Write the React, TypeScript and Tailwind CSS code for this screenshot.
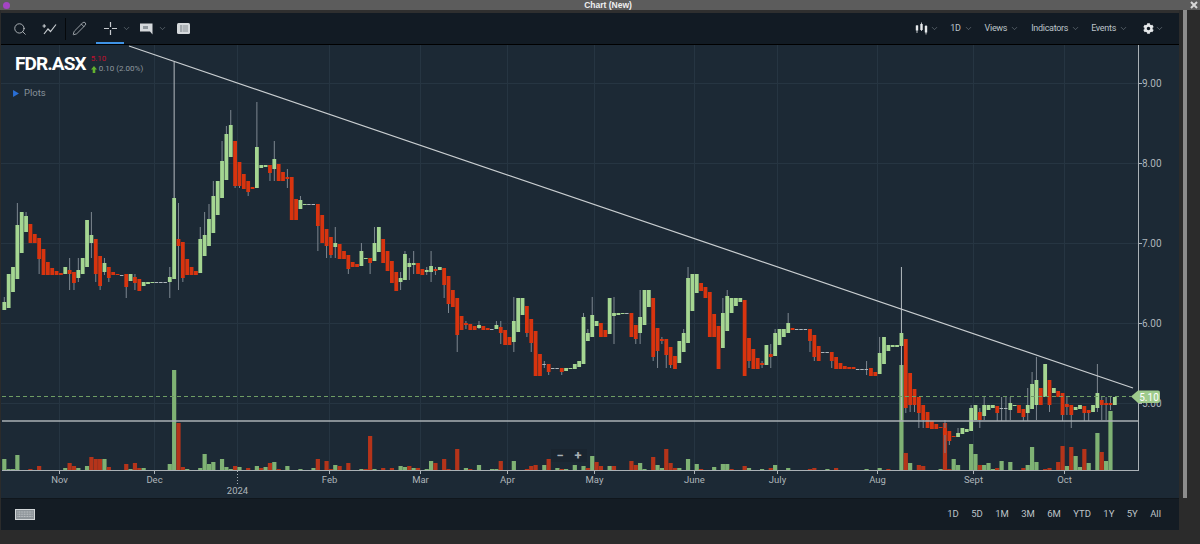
import { ChevronDown, Pencil, Search } from 'lucide-react';
import { FaCog } from 'react-icons/fa';

type Candle = [string, number, number, number?, number?];

// Pixel coordinates of the series, y runs from the top of the window
const CANDLES: Candle[] = [
  ['g',302,310,297],['g',274,308],['g',267,292],['g',225,279,203],['g',212,253],['g',216,232,212],['r',224,243],['r',234,243],['r',238,259,238,274],['r',249,275],
  ['r',262,275],['r',268,275],['r',271,275],['r',273,275],['g',267,274],['r',270,274,258,290],['r',272,283,272,290],['g',270,278,258,282],['g',258,274],['g',220,267],
  ['g',235,243,212,258],['r',239,274,239,282],['r',256,286,256,290],['g',263,272,258,275],['r',267,278,267,282],['r',272,275],['r',274,275],['d',275,276],['r',274,287,274,298],['g',274,281],
  ['r',277,283,274,290],['r',279,291],['g',282,286],['g',282,284],['g',282,283],['d',282,283],['d',282,283],['d',282,283],['g',277,282,267,298],['g',198,279,62,279],
  ['r',239,246,203,290],['r',242,278,242,282],['r',259,275],['r',267,275],['r',271,275],['g',239,273,227,273],['g',235,256,212,256],['g',219,246,204,246],['g',196,233,181,233],['g',181,215],
  ['g',161,198,141,198],['g',134,180,126,180],['g',125,157,110,157],['r',141,186,141,188],['r',162,186,162,188],['r',174,189],['r',181,192,181,196],['r',187,189],['g',147,188,102,188],['g',165,168],
  ['g',165,167],['r',165,173,165,181],['g',159,169,141,181],['r',164,181],['r',172,181],['r',177,179,169,188],['r',177,220],['r',199,220],['g',200,209,196,209],['g',204,205],
  ['d',204,205],['d',204,205],['r',204,226,204,251],['r',215,243],['r',229,246,229,258],['r',237,255,237,258],['g',243,247,227,258],['r',244,259],['r',251,259],['r',255,269,255,274],
  ['r',262,267],['r',264,267],['g',251,266,243,266],['g',258,259],['r',258,263,258,274],['g',243,261,227,261],['g',227,252],['r',239,263],['r',251,271],['r',261,283],
  ['r',272,291],['g',278,282,272,290],['g',254,280,251,280],['g',263,267,258,280],['g',263,265,251,274],['r',263,274],['r',269,275],['g',270,272,267,275],['g',266,272,251,282],['r',269,271,267,275],
  ['g',267,270],['r',268,285,268,298],['r',276,304,276,313],['r',290,307],['r',298,335,298,352],['r',316,330],['r',323,325,321,329],['r',324,330],['r',326,330],['g',325,328,321,329],
  ['r',326,330],['r',328,330],['d',329,330],['g',325,329,321,329],['r',327,333,321,344],['r',330,345],['r',337,345],['g',321,342,297,352],['g',298,332],['g',298,315],
  ['r',306,333,306,337],['r',319,343,319,352],['r',331,376],['r',354,376],['d',364,365,361,368],['r',364,372,364,375],['d',368,369],['d',368,369],['r',368,372,368,375],['g',368,371],
  ['g',368,369],['g',364,369],['g',361,367],['g',317,364,313,364],['g',333,341,329,341],['g',315,337,297,337],['g',321,326],['r',323,337],['r',330,337],['g',298,334],
  ['g',313,316,297,344],['g',313,315],['g',313,314],['d',313,314],['r',313,337],['r',325,339,325,344],['g',317,333,290,344],['g',290,325],['g',290,307],['r',298,357,298,361],
  ['r',328,351,328,368],['r',339,341,337,344],['r',339,355,339,368],['r',347,365,347,368],['r',356,369],['g',341,363],['g',333,352,329,352],['g',278,343,267,343],['g',274,311],['g',274,293],
  ['r',283,291],['r',287,298],['r',292,337],['r',314,337],['r',326,369],['g',313,348,298,348],['g',296,331,290,331],['g',298,313],['g',298,306],['g',298,302],
  ['r',300,376],['r',338,361,338,368],['r',349,369],['r',358,369],['r',363,365,361,368],['g',345,365],['r',354,357,344,368],['g',333,356,329,356],['g',329,345],['g',329,337],
  ['g',323,333,313,333],['r',328,330],['d',329,330],['d',329,330],['d',329,330],['r',329,341,329,352],['r',335,357,335,361],['r',346,361],['d',352,353],['d',352,353],
  ['r',352,361,352,368],['r',357,369],['r',363,369],['r',366,369],['r',367,369],['r',367,369],['d',369,370],['d',369,370],['d',369,370,361,375],['r',368,376],
  ['r',372,376],['g',353,374,337,374],['g',337,364],['g',345,351],['g',345,347],['g',345,347],['g',333,346,267,420],['r',339,408,339,413],['r',373,405,373,412],['r',389,405,389,412],
  ['r',397,413,397,428],['r',405,420,405,428],['r',412,428],['r',421,429],['r',424,429],['r',427,428],['r',428,435,420,453],['r',431,441,431,445],['r',436,437],['g',433,437,428,437],
  ['g',428,434],['g',429,432],['g',408,431,405,431],['g',405,420],['r',412,420,408,428],['g',405,416,397,420],['g',405,410],['g',405,408],['r',406,413,406,421],['d',408,409,397,421],
  ['d',408,409,397,421],['g',403,410,397,420],['g',405,406],['r',405,413],['r',409,417,409,421],['g',405,413,388,421],['g',384,409,372,409],['g',380,405,357,420],['r',388,405],['g',364,397],
  ['r',380,405,380,412],['g',388,393],['r',391,397],['r',393,415,393,421],['r',404,407,397,415],['r',405,415,405,428],['g',407,410],['g',405,409],['r',406,413,406,421],['r',410,413,410,421],
  ['g',405,412],['g',393,408,364,412],['r',400,405,397,420],['r',403,405,397,420],['r',403,405,397,410],['g',397,405],
];

// [candle index, top of the bar, colour]; the bars stand on y=470
const VOLUME: [number, number, string][] = [
  [0,459,'g'],[1,469,'g'],[2,469,'g'],[3,455,'g'],[6,469,'r'],[8,466,'r'],[14,468,'g'],[15,463,'r'],[16,466,'r'],[17,468,'g'],[19,466,'g'],[20,457,'r'],[21,459,'r'],[22,459,'r'],[23,459,'g'],[24,467,'r'],
  [28,464,'r'],[29,469,'g'],[30,463,'r'],[31,468,'r'],[32,468,'g'],[38,464,'g'],[39,370,'g'],[40,423,'r'],[41,467,'r'],[42,469,'g'],[45,468,'g'],[46,454,'g'],[47,464,'g'],[48,462,'g'],[50,459,'g'],[51,467,'g'],
  [52,469,'g'],[53,466,'r'],[54,467,'g'],[56,468,'r'],[58,466,'g'],[59,468,'r'],[60,467,'g'],[61,463,'r'],[62,462,'g'],[63,469,'r'],[65,466,'g'],[68,469,'g'],[71,468,'g'],[72,459,'r'],[74,461,'r'],[75,469,'r'],
  [76,465,'g'],[77,466,'r'],[79,463,'r'],[82,469,'g'],[83,469,'r'],[84,436,'r'],[85,469,'g'],[87,468,'r'],[89,468,'r'],[91,466,'g'],[92,467,'g'],[93,466,'r'],[94,468,'g'],[95,468,'r'],[97,469,'g'],[98,461,'g'],
  [99,463,'r'],[101,459,'r'],[102,469,'r'],[104,449,'r'],[106,468,'g'],[107,469,'r'],[109,465,'g'],[112,469,'g'],[113,469,'g'],[114,461,'r'],[117,461,'g'],[120,469,'r'],[121,466,'r'],[122,465,'r'],[124,465,'g'],[125,459,'r'],
  [127,468,'g'],[128,469,'r'],[129,469,'g'],[131,465,'g'],[133,466,'g'],[134,468,'r'],[135,456,'g'],[136,462,'r'],[137,466,'r'],[139,466,'g'],[140,466,'r'],[144,461,'r'],[145,465,'r'],[146,463,'g'],[147,469,'g'],[149,457,'r'],
  [150,465,'g'],[151,468,'g'],[152,449,'r'],[153,463,'r'],[154,468,'r'],[155,468,'g'],[157,459,'g'],[159,464,'g'],[160,469,'r'],[163,467,'g'],[165,464,'g'],[166,464,'g'],[167,469,'r'],[170,466,'r'],[171,468,'g'],[174,469,'g'],
  [176,468,'r'],[177,465,'g'],[180,468,'g'],[185,469,'r'],[186,468,'r'],[189,469,'g'],[191,468,'r'],[198,469,'g'],[201,468,'g'],[203,469,'r'],[206,365,'g'],[207,453,'r'],[208,463,'g'],[210,465,'r'],[211,466,'r'],[215,469,'g'],
  [216,423,'r'],[217,469,'r'],[218,459,'g'],[219,465,'g'],[222,444,'g'],[223,454,'g'],[224,465,'r'],[225,465,'g'],[226,463,'g'],[227,469,'g'],[228,468,'r'],[229,461,'g'],[231,462,'g'],[234,468,'r'],[235,465,'g'],[236,447,'g'],
  [237,462,'g'],[239,469,'r'],[240,468,'r'],[242,462,'r'],[243,446,'r'],[244,466,'g'],[245,447,'r'],[246,456,'g'],[247,467,'g'],[248,449,'r'],[249,463,'g'],[251,433,'g'],[252,452,'r'],[253,461,'g'],[254,411,'g'],
];

const MONTHS: [string, number][] = [['Nov',58],['Dec',153],['Feb',328],['Mar',419],['Apr',506],['May',593],['June',693],['July',776],['Aug',876],['Sept',972],['Oct',1063]];
const GRID_X = [58,153,236,328,419,506,593,693,776,876,972,1063];
const PRICES: [string, number][] = [['9.00',83],['8.00',163],['7.00',243],['6.00',323],['5.00',403]];
const RANGES = ['1D','5D','1M','3M','6M','YTD','1Y','5Y','All'];

const cx = (i: number) => 3.3 + i * 4.355;

function Chart() {
  return (
    <svg width="1178" height="453" viewBox="0 45 1178 453" className="block" fontFamily="Roboto, sans-serif">
      {GRID_X.map((x) => <line key={x} x1={x + 0.5} x2={x + 0.5} y1="45" y2="470" stroke="#263542" />)}
      {PRICES.map(([p, y]) => <line key={p} x1="0" x2="1138" y1={y + 0.5} y2={y + 0.5} stroke="#263542" />)}

      {VOLUME.map(([i, top, c]) => (
        <rect key={i} x={cx(i) - 2.1} y={top} width="4.2" height={470 - top} fill={c === 'g' ? '#7fb274' : '#b5341a'} />
      ))}

      {CANDLES.map(([c, top, bottom, wt, wb], i) => (
        <g key={i}>
          {wt !== undefined && <line x1={cx(i)} x2={cx(i)} y1={wt} y2={wb ?? bottom} stroke={i === 39 || i === 206 ? '#b4bbc0' : '#7d8790'} strokeWidth="1" />}
          {c === 'd'
            ? <line x1={cx(i) - 2} x2={cx(i) + 1.5} y1={top + 0.5} y2={top + 0.5} stroke="#aeb6bb" />
            : <rect x={cx(i) - 1.9} y={top} width="3.8" height={Math.max(bottom - top, 1)} fill={c === 'g' ? '#a5d692' : '#d8340f'} />}
        </g>
      ))}

      <line x1="1" x2="1138" y1="421" y2="421" stroke="#aab0b4" strokeWidth="1.5" />
      <line x1="1" x2="1130" y1="396.5" y2="396.5" stroke="#6f9d64" strokeDasharray="4 3" />
      <line x1="128" y1="46" x2="1132" y2="388" stroke="#c9ced1" strokeWidth="1.2" />

      <line x1="1" x2="1138" y1="470.5" y2="470.5" stroke="#aab1b6" />
      <line x1="1137.5" x2="1137.5" y1="45" y2="470" stroke="#aab1b6" />
      {PRICES.map(([p, y]) => (
        <g key={p}>
          <line x1="1138" x2="1141" y1={y + 0.5} y2={y + 0.5} stroke="#aab1b6" />
          <text x="1141" y={y + 3.5} fontSize="10" fill="#aeb5ba">{p}</text>
        </g>
      ))}
      {MONTHS.map(([m, x]) => (
        <g key={m}>
          <line x1={x + 0.5} x2={x + 0.5} y1="471" y2="474" stroke="#aab1b6" />
          <text x={x + 0.5} y="483" fontSize="9.5" textAnchor="middle" fill="#aeb5ba">{m}</text>
        </g>
      ))}
      <line x1="236.5" x2="236.5" y1="471" y2="484" stroke="#aab1b6" strokeDasharray="1 2" />
      <text x="236.5" y="494" fontSize="9.5" textAnchor="middle" fill="#aeb5ba">2024</text>

      <path d="M1130 396.5 L1137 390.5 H1157 a2 2 0 0 1 2 2 V401 a2 2 0 0 1 -2 2 H1137 Z" fill="#9ecb8c" />
      <text x="1148" y="400.5" fontSize="10" textAnchor="middle" fill="#ffffff">5.10</text>
    </svg>
  );
}

function Caret() {
  return <ChevronDown className="h-[9px] w-[9px] text-[#7f8990]" strokeWidth={1.5} />;
}

function MenuItem({ label, className }: { label: string; className: string }) {
  return (
    <div className={`flex items-center gap-[3px] text-[9px] tracking-[-0.3px] text-[#bcc3c8] ${className}`}>
      <span>{label}</span>
      <Caret />
    </div>
  );
}

export default function App() {
  return (
    <div className="flex h-[544px] w-[1200px] flex-col overflow-hidden bg-[#2b2b2b] font-['Roboto',sans-serif]">
      <div className="relative flex h-[10px] items-center justify-between bg-[#5c5c5c] pl-[3px] pr-[2px]">
        <div className="h-[7px] w-[7px] rounded-full bg-[#a445c4]" />
        <span className="ml-[16px] font-['Liberation_Sans',sans-serif] text-[8.5px] font-bold leading-[10px] text-[#f0f0f0]">Chart (New)</span>
        <svg className="h-[8px] w-[8px]" viewBox="0 0 8 8" stroke="#d8d8d8" strokeWidth="2">
          <path d="M1 1L7 7M7 1L1 7" />
        </svg>
      </div>

      <div className="flex min-h-0 flex-1">
        <div className="flex w-[1179px] flex-col pl-[1px] pb-[14px]">
          <div className="h-[3px] bg-[#2f2f2f]" />
          <div className="flex h-[32px] items-center border-b border-black bg-[#121b24]">
            <Search className="ml-[12px] h-[14px] w-[14px] text-[#c6cbcf]" strokeWidth={1.4} />
            <svg className="ml-[14px] h-[14px] w-[16px]" viewBox="0 0 16 14" fill="none" stroke="#c6cbcf" strokeWidth="1.2">
              <path d="M1.5 4H5M3.2 2.2V5.8" />
              <path d="M3 12L7 7L9.5 9.5L15 2.5" />
            </svg>
            <div className="ml-[8px] h-[22px] w-px bg-[#05080b]" />
            <Pencil className="ml-[6px] h-[15px] w-[15px] text-[#c6cbcf]" strokeWidth={1.2} />
            <div className="relative ml-[9px] flex h-full w-[28px] items-center justify-center">
              <svg className="h-[13px] w-[13px]" viewBox="0 0 13 13" stroke="#c6cbcf" strokeWidth="1.2">
                <path d="M6.5 0V5M6.5 8V13M0 6.5H5M8 6.5H13" />
              </svg>
              <div className="absolute bottom-0 left-0 right-0 h-[2px] bg-[#3f93e6]" />
            </div>
            <div className="-ml-[2px]"><Caret /></div>
            <svg className="ml-[9px] h-[12px] w-[13px]" viewBox="0 0 13 12" fill="#d5d9dc">
              <path d="M0 0.5H12.5V11.5L10 8.5H0Z" />
              <path d="M3 3H8V6H3Z" fill="#8f979d" />
            </svg>
            <div className="ml-[5px]"><Caret /></div>
            <svg className="ml-[10px] h-[11px] w-[13px]" viewBox="0 0 13 11">
              <rect width="13" height="11" rx="1.5" fill="#d5d9dc" />
              <rect x="3.5" y="2" width="1" height="7" fill="#6f777d" />
              <rect x="5.5" y="2" width="5.5" height="7" fill="#aeb4b8" />
            </svg>

            <svg className="ml-auto h-[13px] w-[13px]" viewBox="0 0 13 13" fill="#e6e9eb" stroke="#e6e9eb">
              <path d="M2 3V11M6.5 0.5V9M11 3V12.5" strokeWidth="0.8" />
              <rect x="0.8" y="3.5" width="2.4" height="5" stroke="none" />
              <rect x="5.3" y="2" width="2.4" height="6" stroke="none" />
              <rect x="9.8" y="4" width="2.4" height="6.5" stroke="none" />
            </svg>
            <div className="ml-[2px]"><Caret /></div>
            <MenuItem label="1D" className="ml-[11px]" />
            <MenuItem label="Views" className="ml-[12px]" />
            <MenuItem label="Indicators" className="ml-[12px]" />
            <MenuItem label="Events" className="ml-[11px]" />
            <FaCog className="ml-[15px] h-[11px] w-[11px] text-[#e6e9eb]" />
            <div className="ml-[1px] mr-[15px]"><Caret /></div>
          </div>

          <div className="relative h-[453px] bg-[#1c2935]">
            <Chart />
            <div className="absolute left-[14px] top-[7px] flex items-start gap-[5px]">
              <span className="text-[19px] font-bold leading-[24px] tracking-[-0.9px] text-white">FDR.ASX</span>
              <div className="pt-[2px] text-[8px] leading-[10px] text-[#8f989f]">
                <div className="text-[#c3102f]">5.10</div>
                <div className="flex items-center gap-[2px]">
                  <svg className="h-[7px] w-[6px]" viewBox="0 0 6 7" fill="#63b22f"><path d="M3 0L6 3.5H4.3V7H1.7V3.5H0Z" /></svg>
                  <span>0.10 (2.00%)</span>
                </div>
              </div>
            </div>
            <div className="absolute left-[12px] top-[42px] flex items-center gap-[5px] text-[9.5px] leading-[12px] text-[#87919a]">
              <svg className="h-[7px] w-[6px]" viewBox="0 0 5 6" fill="#2a6fd6"><path d="M0 0L5 3L0 6Z" /></svg>
              <span>Plots</span>
            </div>
            <div className="absolute left-[550px] top-[404px] flex h-[13px] w-[36px] items-center justify-around bg-[#1a2530] text-[13px] font-bold leading-none text-[#a8afb4]">
              <span>−</span>
              <span>+</span>
            </div>
          </div>

          <div className="flex h-[32px] items-center border-t border-[#10161c] bg-[#141c24]">
            <svg className="ml-[14px] h-[11px] w-[20px]" viewBox="0 0 20 11">
              <rect x="0.5" y="0.5" width="19" height="10" fill="#8d9499" stroke="#d2d6d8" />
              <path d="M2.5 3H17.5M2.5 5.2H17.5M2.5 7.4H17.5" stroke="#c4c9cc" strokeDasharray="1 0.6" />
            </svg>
            <div className="ml-auto mr-[18px] flex items-center gap-[12.4px] text-[9.5px] text-[#bcc3c8]">
              {RANGES.map((r) => <span key={r}>{r}</span>)}
            </div>
          </div>
        </div>

        <div className="ml-[4px] h-[488px] w-[4px] bg-[#8c8c8c]" />
      </div>
    </div>
  );
}
